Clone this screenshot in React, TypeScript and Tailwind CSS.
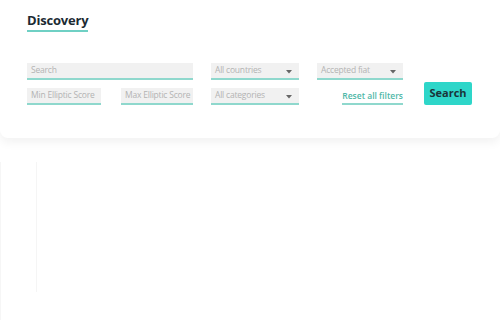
function Field({ label, width, select }: { label: string; width: string; select?: boolean }) {
  return (
    <div className={`flex h-[17px] items-center justify-between overflow-hidden border-b-2 border-[#8fd8cd] bg-[#f1f1f1] pl-1 pr-[7px] ${width}`}>
      <span className="whitespace-nowrap text-[8.5px] leading-none tracking-[-0.2px] text-[#b3b3b3]">{label}</span>
      {select && (
        <svg width="6" height="4" viewBox="0 0 6 4" className="mt-[3px] shrink-0">
          <path d="M0 0 L6 0 L3 3.5 Z" fill="#666" />
        </svg>
      )}
    </div>
  );
}

export default function App() {
  return (
    <div className="h-[320px] w-[500px] overflow-hidden bg-white font-['Open_Sans',sans-serif]">
      <section className="rounded-b-lg bg-white px-[27px] pb-[33px] pt-[7px] shadow-[0_5px_10px_rgba(0,0,0,0.05)]">
        <h1 className="inline-block border-b-2 border-[#6fd0c4] pb-[1px] text-[13px] font-bold leading-[18px] tracking-[-0.2px] text-[#1c2b33]">
          Discovery
        </h1>

        <div className="mt-[31px] flex items-end">
          <div className="flex w-[166px] flex-col gap-2">
            <Field label="Search" width="w-[166px]" />
            <div className="flex justify-between">
              <Field label="Min Elliptic Score" width="w-[74px]" />
              <Field label="Max Elliptic Score" width="w-[72px]" />
            </div>
          </div>

          <div className="ml-[18px] flex w-[88px] flex-col gap-2">
            <Field label="All countries" width="w-[88px]" select />
            <Field label="All categories" width="w-[88px]" select />
          </div>

          <div className="ml-[18px] flex w-[86px] flex-col items-end gap-2">
            <Field label="Accepted fiat" width="w-[86px]" select />
            <a className="h-[17px] whitespace-nowrap border-b-2 border-[#8fd8cd] text-[8.5px] font-semibold leading-[15px] text-[#4fb8a8]">
              Reset all filters
            </a>
          </div>

          <button className="ml-[21px] h-[23px] w-[48px] rounded-[2px] bg-[#2ed6c9] text-[11px] font-bold text-[#1a3439]">
            Search
          </button>
        </div>
      </section>

      <div className="mt-[24px] flex h-[185px] rounded-bl-2xl border-l border-[#f6f6f6]">
        <div className="ml-[35px] h-[130px] border-l border-[#f5f5f5]" />
      </div>
    </div>
  );
}
